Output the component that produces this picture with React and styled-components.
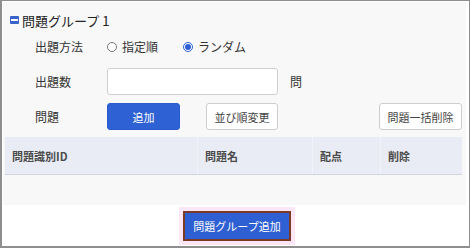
import React, { useState } from "react";
import styled, { createGlobalStyle } from "styled-components";

const GlobalStyle = createGlobalStyle`
    html, body {
        margin: 0;
        padding: 0;
        background: #ffffff;
    }
    body {
        font-family: "Noto Sans CJK JP", "Noto Sans", "Liberation Sans", sans-serif;
        color: #333;
    }
`;

const Frame = styled.div`
    box-sizing: border-box;
    width: 470px;
    height: 248px;
    border: 1px solid #8e8e8e;
    border-left-width: 2px;
    border-bottom-width: 2px;
    background: #fff;
    display: flex;
    flex-direction: column;
`;

const Panel = styled.section`
    margin: 1px 3px 0 1px;
    height: 203px;
    background: #f8f8f8;
    display: flex;
    flex-direction: column;
`;

const Title = styled.div`
    display: flex;
    align-items: center;
    gap: 3px;
    padding: 9px 0 0 7px;
    height: 18px;
    font-size: 13px;
    color: #222;
`;

const Toggle = styled.span`
    width: 9px;
    height: 8px;
    background: #3a63c9;
    border-radius: 1px;
    display: flex;
    align-items: center;
    justify-content: center;
    &::after {
        content: "";
        width: 7px;
        height: 2px;
        background: #fff;
    }
`;

const Form = styled.div`
    display: grid;
    grid-template-columns: 72px 1fr;
    grid-template-rows: 27px 27px 27px;
    row-gap: 8px;
    padding: 4px 4px 0 32px;
    align-items: center;
`;

const Label = styled.div`
    font-size: 12px;
    color: #333;
`;

const Controls = styled.div`
    display: flex;
    align-items: center;
`;

const Radio = styled.label`
    display: flex;
    align-items: center;
    gap: 5px;
    margin-right: 25px;
    font-size: 12px;
    color: #333;
    cursor: pointer;
`;

const Dot = styled.span`
    box-sizing: border-box;
    width: 10px;
    height: 10px;
    border-radius: 50%;
    border: 1px solid ${p => (p.$on ? "#2d5fd3" : "#777")};
    background: #fff;
    display: flex;
    align-items: center;
    justify-content: center;
    &::after {
        content: "";
        width: 6px;
        height: 6px;
        border-radius: 50%;
        background: ${p => (p.$on ? "#2d5fd3" : "transparent")};
    }
`;

const TextInput = styled.input`
    box-sizing: border-box;
    width: 171px;
    height: 27px;
    border: 1px solid #cfcfcf;
    border-radius: 3px;
    background: #fff;
    outline: none;
`;

const Unit = styled.span`
    margin-left: 12px;
    font-size: 12px;
    color: #333;
`;

const Button = styled.button`
    box-sizing: border-box;
    width: ${p => p.$w}px;
    height: 27px;
    border-radius: 3px;
    font-family: inherit;
    font-size: 11px;
    padding: 0;
    cursor: pointer;
    border: 1px solid ${p => (p.$primary ? "#2a5ccf" : "#cdcdcd")};
    background: ${p => (p.$primary ? "#2e61d4" : "#fff")};
    color: ${p => (p.$primary ? "#fff" : "#444")};
    margin-right: ${p => p.$gap || 0}px;
    margin-left: ${p => (p.$push ? "auto" : "0")};
`;

const Table = styled.div`
    margin: 7px 4px 0 2px;
`;

const HeadRow = styled.div`
    display: grid;
    grid-template-columns: 192px 115px 68px 1fr;
    height: 37px;
    background: #e9ecf4;
    border-bottom: 1px solid #d3d5db;
`;

const HeadCell = styled.div`
    display: flex;
    align-items: center;
    padding-left: 7px;
    font-size: 11px;
    font-weight: bold;
    color: #4a4a4a;
    border-left: ${p => (p.$first ? "none" : "1px solid #f1f3f8")};
`;

const Footer = styled.div`
    flex: 1;
    display: flex;
    justify-content: center;
    align-items: flex-start;
    padding-top: 6px;
`;

const AddGroup = styled.button`
    box-sizing: border-box;
    width: 108px;
    height: 30px;
    margin-left: 3px;
    border: 2px solid #7c3a25;
    background: #2f60d3;
    color: #fff;
    font-family: inherit;
    font-size: 11px;
    padding: 0;
    box-shadow: 0 0 0 4px #fde6f6;
    cursor: pointer;
`;

export default () => {
    const [mode, setMode] = useState("random");

    return (
        <>
            <GlobalStyle />
            <Frame>
                <Panel>
                    <Title>
                        <Toggle />
                        問題グループ 1
                    </Title>
                    <Form>
                        <Label>出題方法</Label>
                        <Controls>
                            <Radio onClick={() => setMode("order")}>
                                <Dot $on={mode === "order"} />
                                指定順
                            </Radio>
                            <Radio onClick={() => setMode("random")}>
                                <Dot $on={mode === "random"} />
                                ランダム
                            </Radio>
                        </Controls>
                        <Label>出題数</Label>
                        <Controls>
                            <TextInput />
                            <Unit>問</Unit>
                        </Controls>
                        <Label>問題</Label>
                        <Controls>
                            <Button $primary $w={73} $gap={26}>追加</Button>
                            <Button $w={72}>並び順変更</Button>
                            <Button $w={83} $push>問題一括削除</Button>
                        </Controls>
                    </Form>
                    <Table>
                        <HeadRow>
                            <HeadCell $first>問題識別ID</HeadCell>
                            <HeadCell>問題名</HeadCell>
                            <HeadCell>配点</HeadCell>
                            <HeadCell>削除</HeadCell>
                        </HeadRow>
                    </Table>
                </Panel>
                <Footer>
                    <AddGroup>問題グループ追加</AddGroup>
                </Footer>
            </Frame>
        </>
    );
};
